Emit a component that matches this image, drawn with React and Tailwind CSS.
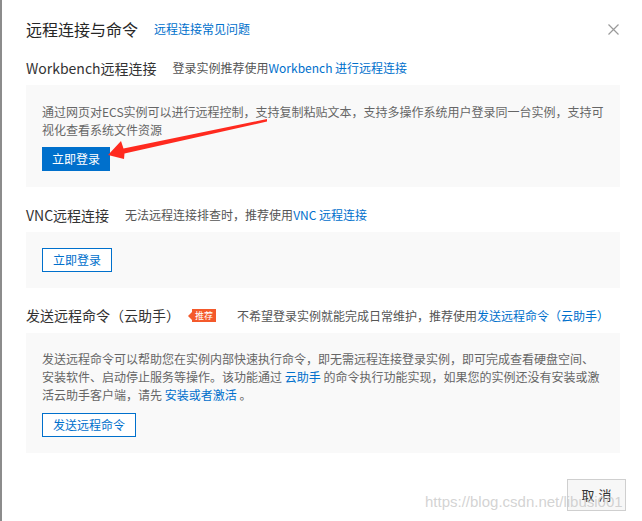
import React from 'react';

const Section = ({ title, badge, desc, link, gap = 'mt-[10px]', rowH = 'h-[34px]', children, boxPad }) => (
  <div className={gap}>
    <div className={`${rowH} flex items-center`}>
      <span className="text-[14px] text-[#333]">{title}</span>
      {badge}
      <span className={`text-[12px] text-[#555] ${badge ? 'ml-[21px]' : 'ml-[16px]'}`}>
        {desc}
        <span className="text-[#0070cc]">{link}</span>
      </span>
    </div>
    <div className={`bg-[#f9f9f9] px-[16px] ${boxPad}`}>{children}</div>
  </div>
);

const Badge = () => (
  <span className="relative ml-[12px] inline-flex items-center h-[13px] px-[3px] bg-[#f4592b] text-white text-[9px] leading-none">
    <span className="absolute left-[-4px] top-1/2 -translate-y-1/2 w-0 h-0 border-y-[4px] border-y-transparent border-r-[4px] border-r-[#f4592b]" />
    推荐
  </span>
);

const App = () => {
  return (
    <div className="relative w-[642px] h-[521px] bg-white overflow-hidden flex font-['Noto_Sans_CJK_SC','Noto_Sans',sans-serif]">
      <div className="w-[2px] shrink-0 bg-[#8c8c8c]" />

      <div className="flex-1 flex flex-col pl-[24px] pr-[22px]">
        {/* header */}
        <div className="mt-[17px] h-[24px] flex items-center justify-between">
          <div className="flex items-center">
            <span className="text-[16px] text-[#262626]">远程连接与命令</span>
            <span className="ml-[16px] text-[12px] text-[#0070cc]">远程连接常见问题</span>
          </div>
          <svg width="11" height="11" viewBox="0 0 11 11" className="mr-[1px]">
            <path d="M0.5 0.5 L10.5 10.5 M10.5 0.5 L0.5 10.5" stroke="#9a9a9a" strokeWidth="1.2" />
          </svg>
        </div>

        <Section
          title="Workbench远程连接"
          desc="登录实例推荐使用"
          link="Workbench 进行远程连接"
          boxPad="pt-[18px] pb-[16px]"
        >
          <p className="text-[12px] leading-[18px] text-[#666]">
            通过网页对ECS实例可以进行远程控制，支持复制粘贴文本，支持多操作系统用户登录同一台实例，支持可<br />
            视化查看系统文件资源
          </p>
          <button className="mt-[8px] h-[24px] px-[10px] bg-[#0070cc] text-white text-[12px] leading-none">立即登录</button>
        </Section>

        <Section
          title="VNC远程连接"
          desc="无法远程连接排查时，推荐使用"
          link="VNC 远程连接"
          gap="mt-[11px]"
          boxPad="py-[16px]"
        >
          <button className="block h-[24px] px-[10px] bg-white border border-[#0070cc] text-[#0070cc] text-[12px] leading-none">立即登录</button>
        </Section>

        <Section
          title="发送远程命令（云助手）"
          badge={<Badge />}
          desc="不希望登录实例就能完成日常维护，推荐使用"
          link="发送远程命令（云助手）"
          rowH="h-[35px]"
          boxPad="pt-[17px] pb-[16px]"
        >
          <p className="text-[12px] leading-[18px] text-[#666]">
            发送远程命令可以帮助您在实例内部快速执行命令，即无需远程连接登录实例，即可完成查看硬盘空间、<br />
            安装软件、启动停止服务等操作。该功能通过 <span className="text-[#0070cc]">云助手</span> 的命令执行功能实现，如果您的实例还没有安装或激<br />
            活云助手客户端，请先 <span className="text-[#0070cc]">安装或者激活</span> 。
          </p>
          <button className="mt-[9px] h-[24px] px-[10px] bg-white border border-[#0070cc] text-[#0070cc] text-[12px] leading-none">发送远程命令</button>
        </Section>

        <div className="mt-[26px] flex justify-end -mr-[6px]">
          <button className="w-[59px] h-[32px] border border-[#cfcfcf] bg-[#f7f7f7] text-[#333] text-[13px] tracking-[4px] pl-[4px]">取消</button>
        </div>
      </div>

      {/* annotation arrow */}
      <svg className="absolute inset-0 pointer-events-none" width="642" height="521" viewBox="0 0 642 521">
        <polygon
          points="267,119 123.5,148.5 121,141 108,155 124,159 124.5,153.5 267,121.5"
          fill="#ff2a1f"
        />
      </svg>

      {/* watermark */}
      <div className="absolute left-[425px] top-[491px] text-[15px] text-[#c8c8c8]/80 font-['Liberation_Sans',sans-serif] pointer-events-none whitespace-nowrap">
        https://blog.csdn.net/libusi001
      </div>
    </div>
  );
};

export default App;
